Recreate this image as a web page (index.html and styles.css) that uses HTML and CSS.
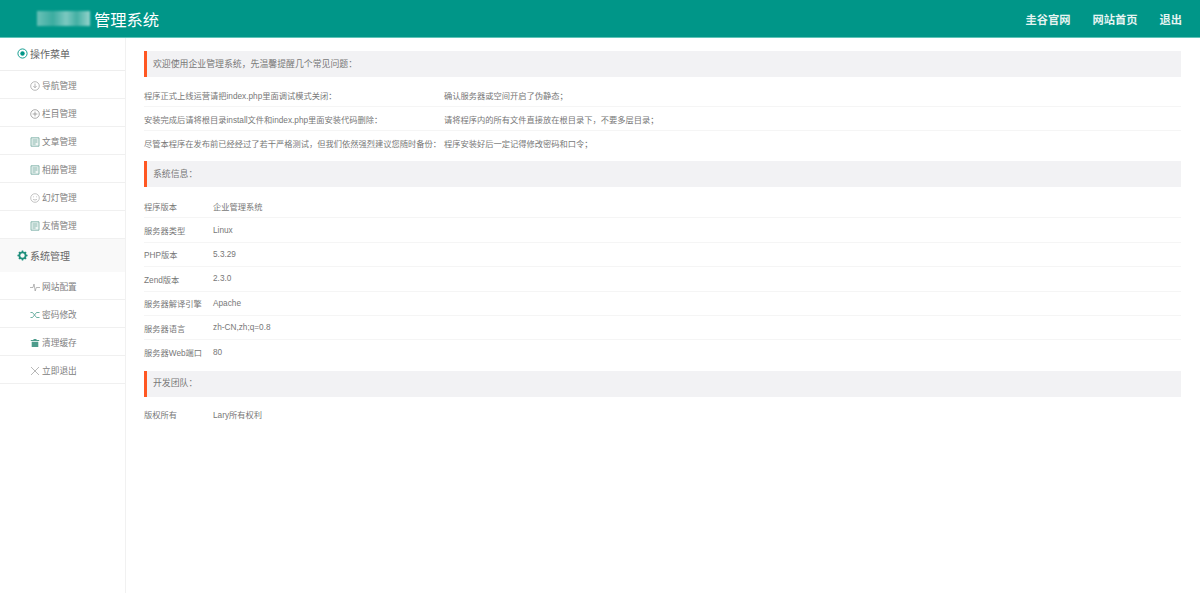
FILE: index.html
```html
<!DOCTYPE html>
<html lang="zh-CN">
<head>
    <meta charset="UTF-8">
    <meta name="viewport" content="width=device-width, initial-scale=1.0">
    <title>管理系统</title>
    <link rel="stylesheet" href="styles.css">
</head>
<body>

<header class="topbar">
    <div class="brand"><span class="brand-mask"></span>管理系统</div>
    <nav class="topnav">
        <a href="#">圭谷官网</a>
        <a href="#">网站首页</a>
        <a href="#">退出</a>
    </nav>
</header>

<div class="layout">
    <aside class="sidebar">
        <div class="side-title">
            <svg class="side-icon" viewBox="0 0 12 12"><circle cx="6" cy="6" r="5" fill="none" stroke="#009688"/><circle cx="6" cy="6" r="2.4" fill="#009688"/></svg>
            操作菜单
        </div>
        <a class="side-item" href="#">
            <svg class="item-icon" viewBox="0 0 10 10"><circle cx="5" cy="5" r="4.3" fill="none" stroke="#999" stroke-width=".7"/><path d="M5 2.5v4M3.4 5 5 6.8 6.6 5" fill="none" stroke="#999" stroke-width=".7"/></svg>
            导航管理
        </a>
        <a class="side-item" href="#">
            <svg class="item-icon" viewBox="0 0 10 10"><circle cx="5" cy="5" r="4.3" fill="none" stroke="#888" stroke-width=".7"/><path d="M5 2.6v4.8M2.6 5h4.8" fill="none" stroke="#888" stroke-width=".7"/></svg>
            栏目管理
        </a>
        <a class="side-item" href="#">
            <svg class="item-icon" viewBox="0 0 10 10"><path d="M1 .8h8v8.4H1zM2.6 3h4.8M2.6 5h4.8M2.6 7h3" fill="#eef5f3" stroke="#6fa79d" stroke-width=".8"/></svg>
            文章管理
        </a>
        <a class="side-item" href="#">
            <svg class="item-icon" viewBox="0 0 10 10"><path d="M1 .8h8v8.4H1zM2.6 3h4.8M2.6 5h4.8M2.6 7h3" fill="#eef5f3" stroke="#6fa79d" stroke-width=".8"/></svg>
            相册管理
        </a>
        <a class="side-item" href="#">
            <svg class="item-icon" viewBox="0 0 10 10"><circle cx="5" cy="5" r="4.3" fill="none" stroke="#aaa" stroke-width=".7"/><path d="M3 6.2c1 1 3 1 4 0M3.2 3.8h.8M6 3.8h.8" fill="none" stroke="#aaa" stroke-width=".7"/></svg>
            幻灯管理
        </a>
        <a class="side-item" href="#">
            <svg class="item-icon" viewBox="0 0 10 10"><path d="M1 .8h8v8.4H1zM2.6 3h4.8M2.6 5h4.8M2.6 7h3" fill="#eef5f3" stroke="#6fa79d" stroke-width=".8"/></svg>
            友情管理
        </a>
        <div class="side-title side-title-alt">
            <svg class="side-icon" viewBox="0 0 12 12"><circle cx="6" cy="6" r="3.4" fill="none" stroke="#1f8f7c" stroke-width="2"/><path d="M6 .5v2M6 9.5v2M.5 6h2M9.5 6h2M2.1 2.1l1.4 1.4M8.5 8.5l1.4 1.4M9.9 2.1 8.5 3.5M3.5 8.5 2.1 9.9" stroke="#1f8f7c" stroke-width="1.6"/></svg>
            系统管理
        </div>
        <a class="side-item" href="#">
            <svg class="item-icon" viewBox="0 0 10 10"><path d="M0 5.5h3l1-3.5 1.2 7L6.300 5.500H10" fill="none" stroke="#999" stroke-width=".7"/></svg>
            网站配置
        </a>
        <a class="side-item" href="#">
            <svg class="item-icon" viewBox="0 0 10 10"><path d="M.5 2.500h2l4 5h3M.5 7.500h2l4-5h3" fill="none" stroke="#5fa898" stroke-width=".9"/></svg>
            密码修改
        </a>
        <a class="side-item" href="#">
            <svg class="item-icon" viewBox="0 0 10 10"><path d="M.8 2h8.400v1H.8zM3.500 1h3v1h-3zM1.700 3.800h6.600V9H1.700z" fill="#4d9c8c"/></svg>
            清理缓存
        </a>
        <a class="side-item" href="#">
            <svg class="item-icon" viewBox="0 0 10 10"><path d="M1 1l8 8M9 1 1 9" fill="none" stroke="#999" stroke-width=".7"/></svg>
            立即退出
        </a>
    </aside>

    <main class="content">
        <div class="banner">欢迎使用企业管理系统，先温馨提醒几个常见问题：</div>
        <div class="tips">
            <div class="row">
                <span class="tip-a">程序正式上线运营请把index.php里面调试模式关闭：</span>
                <span>确认服务器或空间开启了伪静态；</span>
            </div>
            <div class="row">
                <span class="tip-a">安装完成后请将根目录install文件和index.php里面安装代码删除：</span>
                <span>请将程序内的所有文件直接放在根目录下，不要多层目录；</span>
            </div>
            <div class="row row-last">
                <span class="tip-a">尽管本程序在发布前已经经过了若干严格测试，但我们依然强烈建议您随时备份：</span>
                <span>程序安装好后一定记得修改密码和口令；</span>
            </div>
        </div>

        <div class="banner">系统信息：</div>
        <div class="info">
            <div class="row"><span class="label">程序版本</span><span>企业管理系统</span></div>
            <div class="row"><span class="label">服务器类型</span><span>Linux</span></div>
            <div class="row"><span class="label">PHP版本</span><span>5.3.29</span></div>
            <div class="row"><span class="label">Zend版本</span><span>2.3.0</span></div>
            <div class="row"><span class="label">服务器解译引擎</span><span>Apache</span></div>
            <div class="row"><span class="label">服务器语言</span><span>zh-CN,zh;q=0.8</span></div>
            <div class="row row-last"><span class="label">服务器Web端口</span><span>80</span></div>
        </div>

        <div class="banner">开发团队：</div>
        <div class="info info-short">
            <div class="row row-last"><span class="label">版权所有</span><span>Lary所有权利</span></div>
        </div>
    </main>
</div>

</body>
</html>
```

FILE: styles.css
```css
html, body { height: 100%; }
body { margin: 0; font-family: "Liberation Sans", "Noto Sans CJK SC", sans-serif; font-size: 8.250px; color: #777; background: #fff; overflow: hidden; }
a { color: inherit; text-decoration: none; }

.topbar { height: 37px; display: flex; justify-content: space-between; align-items: center; background: #009688; border-bottom: 1px solid #5fc4b8; color: #fff; }
.brand { display: flex; align-items: center; padding-left: 37px; font-size: 16.300px; }
.brand-mask { width: 53px; height: 15px; margin-right: 4px; background: linear-gradient(90deg, #8fd0c8, #4fb3a8 30%, #a6dad4 55%, #5ab8ad 75%, #c8e8e4); opacity: .75; filter: blur(1px); }
.topnav { display: flex; gap: 22px; padding-right: 18px; font-size: 11.250px; font-weight: bold; color: #e6f4f2; }

.layout { display: flex; height: calc(100% - 38px); }

.sidebar { width: 125px; flex: none; border-right: 1px solid #f1f1f1; }
.side-title { box-sizing: border-box; height: 33px; display: flex; align-items: center; gap: 2px; padding: 0 0 2px 17px; border-bottom: 1px solid #eee; font-size: 10px; color: #666; }
.side-title-alt { height: 33px; padding-bottom: 0; background: #f9f9f9; border-bottom: none; }
.side-icon { width: 11px; height: 11px; }
.side-item { box-sizing: border-box; height: 28px; display: flex; align-items: center; gap: 2px; padding: 2px 0 0 30px; border-bottom: 1px solid #f0f0f0; font-size: 8.700px; color: #808080; }
.item-icon { width: 10px; height: 10px; }

.content { flex: 1; padding: 13px 19px 0 18px; }
.banner { height: 26px; display: flex; align-items: center; padding: 0 0 2px 6px; box-sizing: border-box; background: #f2f2f4; border-left: 3px solid #ff5722; font-size: 8.900px; }
.tips { padding: 6px 0 7px; }
.tips .row { height: 23px; }
.info { padding: 7px 0 7px; }
.info-short { padding-top: 6px; }
.row { height: 23.400px; display: flex; align-items: center; border-bottom: 1px solid #f5f5f5; }
.row-last { border-bottom: none; }
.tip-a { width: 300px; flex: none; }
.label { width: 69px; flex: none; }
```
